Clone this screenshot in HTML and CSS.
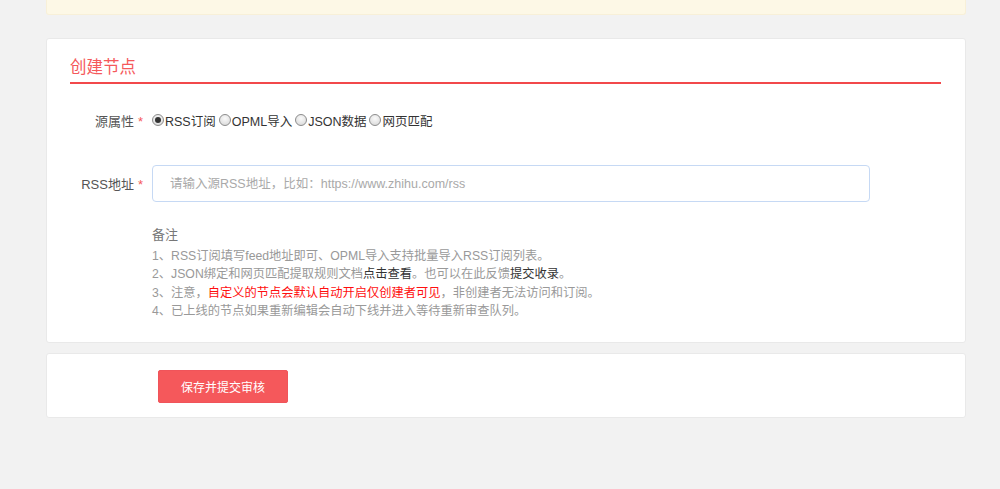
FILE: index.html
```html
<!DOCTYPE html>
<html lang="zh-CN">
<head>
<meta charset="utf-8">
<title>创建节点</title>
<link rel="stylesheet" href="styles.css">
</head>
<body>
<div class="page">
  <div class="notice"></div>

  <div class="card form-card">
    <h2 class="title">创建节点</h2>

    <div class="row row-type">
      <label class="label">源属性<span class="req">*</span></label>
      <div class="field radios">
        <label class="radio"><input type="radio" name="t" checked><span>RSS订阅</span></label>
        <label class="radio"><input type="radio" name="t"><span>OPML导入</span></label>
        <label class="radio"><input type="radio" name="t"><span>JSON数据</span></label>
        <label class="radio"><input type="radio" name="t"><span>网页匹配</span></label>
      </div>
    </div>

    <div class="row row-url">
      <label class="label">RSS地址<span class="req">*</span></label>
      <div class="field">
        <input class="text-input" type="text" placeholder="请输入源RSS地址，比如：https://www.zhihu.com/rss">
      </div>
    </div>

    <div class="notes">
      <div class="notes-title">备注</div>
      <p>1、RSS订阅填写feed地址即可、OPML导入支持批量导入RSS订阅列表。</p>
      <p>2、JSON绑定和网页匹配提取规则文档<a class="link">点击查看</a>。也可以在此反馈<a class="link">提交收录</a>。</p>
      <p>3、注意，<span class="warn">自定义的节点会默认自动开启仅创建者可见</span>，非创建者无法访问和订阅。</p>
      <p>4、已上线的节点如果重新编辑会自动下线并进入等待重新审查队列。</p>
    </div>
  </div>

  <div class="card action-card">
    <button class="btn-submit" type="button">保存并提交审核</button>
  </div>
</div>
</body>
</html>
```

FILE: styles.css
```css
* { box-sizing: border-box; }

html, body {
  margin: 0;
  padding: 0;
  background: #f2f2f2;
  font-family: "Liberation Sans", Arial, "Noto Sans CJK SC", sans-serif;
  font-size: 13px;
  color: #333;
}

.page {
  width: 920px;
  margin-left: 46px;
}

.notice {
  height: 15px;
  background: #fdf8e6;
  border: 1px solid #f8f0d8;
  border-top: none;
  border-radius: 0 0 3px 3px;
}

.card {
  background: #fff;
  border: 1px solid #e9e9e9;
  border-radius: 3px;
}

.form-card {
  margin-top: 23px;
  padding: 13px 24px 21px 23px;
}

.title {
  margin: 0;
  font-size: 16.5px;
  font-weight: normal;
  color: #f5595b;
  line-height: 30px;
  height: 32px;
  border-bottom: 2px solid #f2484b;
}

.row {
  display: flex;
  align-items: center;
}

.row-type {
  margin-top: 25px;
  height: 22px;
}

.row-url {
  margin-top: 34px;
}

.label {
  width: 82px;
  flex: none;
  text-align: right;
  padding-right: 9px;
  color: #555;
}

.req {
  color: #f5595b;
  margin-left: 4px;
}

.field { flex: 1; }

.radios {
  display: flex;
  align-items: center;
  font-size: 12.5px;
}

.radio {
  display: flex;
  align-items: center;
  color: #333;
  margin-right: 3px;
}

.radio input {
  appearance: none;
  -webkit-appearance: none;
  width: 12px;
  height: 12px;
  margin: 0 1px 1px 0;
  border: 1px solid #8c8c8c;
  border-radius: 50%;
  background: radial-gradient(circle at 50% 35%, #fafafa 0%, #e4e4e4 60%, #d2d2d2 100%);
  position: relative;
}

.radio input:checked::after {
  content: "";
  position: absolute;
  left: 2px;
  top: 2px;
  width: 6px;
  height: 6px;
  border-radius: 50%;
  background: #333;
}

.text-input {
  display: block;
  width: 718px;
  height: 37px;
  border: 1px solid #c6d9f4;
  border-radius: 4px;
  padding: 0 17px;
  font-family: inherit;
  font-size: 12.5px;
  color: #333;
  outline: none;
}

.text-input::placeholder { color: #a9a9a9; }

.notes {
  margin-top: 24px;
  margin-left: 82px;
  color: #999;
  font-size: 12.25px;
  line-height: 18.5px;
}

.notes-title {
  color: #777;
  font-size: 13px;
  margin-bottom: 2px;
}

.notes p { margin: 0; }

.link { color: #333; }

.warn { color: #ff0f0f; }

.action-card {
  margin-top: 10px;
  height: 65px;
  padding: 16px 0 0 111px;
}

.btn-submit {
  width: 130px;
  height: 33px;
  border: 1px solid #f0545a;
  border-radius: 2px;
  background: #f5585b;
  color: #fff;
  font-family: inherit;
  font-size: 12px;
  cursor: pointer;
  padding: 0;
}
```
